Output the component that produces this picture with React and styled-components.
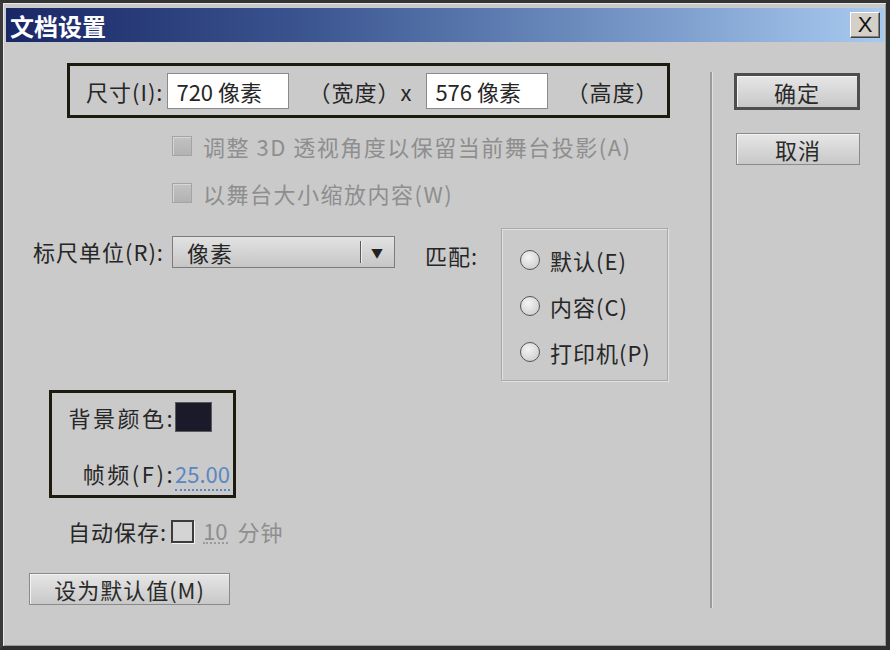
import React from 'react'
import styled, { createGlobalStyle } from 'styled-components'

const GlobalStyle = createGlobalStyle`
  html, body {
    margin: 0;
    padding: 0;
    background: #2b2b2b;
  }
  body {
    font-family: "Noto Sans CJK SC", "Noto Sans", sans-serif;
  }
`

const Window = styled.div`
  width: 890px;
  height: 650px;
  box-sizing: border-box;
  background: #cacaca;
  border-top: 3px solid #333;
  border-left: 3px solid #3a3a3a;
  border-right: 4px solid #2e2e2e;
  border-bottom: 4px solid #2e2e2e;
  box-shadow: inset 1px 1px 0 #e8e8e8, inset -1px -1px 0 #9a9a9a;
  padding: 5px 2px 0 3px;
  display: flex;
  flex-direction: column;
  color: #262626;
  font-size: 22px;
  letter-spacing: 1px;
`

const TitleBar = styled.div`
  height: 34px;
  flex: none;
  display: flex;
  align-items: center;
  justify-content: space-between;
  padding: 0 4px 0 4px;
  background: linear-gradient(90deg, #1a2766 0%, #3c5692 35%, #7394c4 70%, #a8caf0 100%);
`

const Title = styled.span`
  color: #fff;
  font-weight: bold;
  font-size: 24px;
  letter-spacing: 0;
`

const CloseButton = styled.div`
  width: 30px;
  height: 26px;
  box-sizing: border-box;
  background: #d4d0c8;
  border: 1px solid;
  border-color: #fff #404040 #404040 #fff;
  box-shadow: inset -1px -1px 0 #808080;
  display: flex;
  align-items: center;
  justify-content: center;
  color: #111;
  font-family: "Liberation Sans", sans-serif;
  font-size: 22px;
  letter-spacing: 0;
`

const Body = styled.div`
  flex: 1;
  display: flex;
`

const Main = styled.div`
  width: 704px;
  display: flex;
  flex-direction: column;
  padding-top: 21px;
`

const Highlight = styled.div`
  border: 3px solid #1d1b0e;
  box-sizing: border-box;
`

const SizeBox = styled(Highlight)`
  margin-left: 61px;
  width: 603px;
  height: 55px;
  display: flex;
  align-items: center;
  padding-left: 16px;
`

const Label = styled.span`
  white-space: nowrap;
  color: ${p => (p.$disabled ? '#8e8e8e' : '#262626')};
  margin-left: ${p => p.$ml || 0}px;
`

const TextInput = styled.div`
  width: 122px;
  height: 36px;
  box-sizing: border-box;
  background: #fff;
  border: 1px solid #8a8a8a;
  display: flex;
  align-items: center;
  padding-left: 8px;
  margin-left: ${p => p.$ml || 0}px;
  margin-right: ${p => p.$mr || 0}px;
  letter-spacing: 0;
`

const CheckRow = styled.div`
  height: 36px;
  margin-top: ${p => p.$mt}px;
  margin-left: 166px;
  display: flex;
  align-items: center;
  gap: 11px;
  letter-spacing: 1.5px;
`

const DisabledBox = styled.span`
  width: 20px;
  height: 20px;
  box-sizing: border-box;
  background: linear-gradient(#c2c2c2, #b2b2b2);
  border: 1px solid #a4a4a4;
  box-shadow: inset 1px 1px 0 #d6d6d6;
`

const RulerRow = styled.div`
  margin-top: 17px;
  display: flex;
  align-items: flex-start;
`

const RulerLabel = styled(Label)`
  margin-left: 27px;
  margin-top: 7px;
  width: 139px;
`

const Select = styled.div`
  margin-top: 8px;
  width: 223px;
  height: 32px;
  box-sizing: border-box;
  border: 1px solid #7c7c7c;
  background: linear-gradient(#e2e2e2, #c6c6c6);
  display: flex;
  align-items: center;
  padding-left: 14px;
`

const SelectValue = styled.span`
  flex: 1;
`

const SelectDivider = styled.span`
  width: 1px;
  height: 22px;
  background: #5a5a5a;
  box-shadow: 1px 0 0 #eee;
`

const Arrow = styled.span`
  width: 33px;
  display: flex;
  justify-content: center;
  font-size: 12px;
  color: #222;
`

const MatchLabel = styled(Label)`
  margin-left: 30px;
  margin-top: 11px;
  width: 76px;
`

const GroupBox = styled.div`
  width: 167px;
  height: 153px;
  box-sizing: border-box;
  border: 1px solid #a8a8a8;
  box-shadow: 1px 1px 0 #e2e2e2, inset 1px 1px 0 #e2e2e2;
  padding: 13px 0 0 18px;
  display: flex;
  flex-direction: column;
  gap: 10px;
`

const RadioRow = styled.div`
  height: 36px;
  display: flex;
  align-items: center;
  gap: 10px;
`

const Radio = styled.span`
  width: 20px;
  height: 20px;
  box-sizing: border-box;
  border-radius: 50%;
  border: 1.5px solid #555;
  background: radial-gradient(circle at 40% 35%, #f4f4f4, #c6c6c6);
`

const StageBox = styled(Highlight)`
  margin-top: 9px;
  margin-left: 43px;
  width: 187px;
  height: 108px;
  padding-top: 9px;
  display: grid;
  grid-template-columns: 123px auto;
  grid-auto-rows: 30px;
  row-gap: 26px;
  align-items: center;
  letter-spacing: 2.5px;
`

const RightLabel = styled(Label)`
  text-align: right;
  padding-right: 0;
`

const Swatch = styled.span`
  width: 37px;
  height: 30px;
  box-sizing: border-box;
  background: #1a1a2a;
  border: 1px solid #5a5a5a;
`

const LinkValue = styled.span`
  color: ${p => (p.$disabled ? '#8e8e8e' : '#5a86c4')};
  border-bottom: 2px dotted ${p => (p.$disabled ? '#9a9a9a' : '#5a86c4')};
  line-height: 24px;
  letter-spacing: 0;
`

const AutoSaveRow = styled.div`
  margin-top: 15px;
  height: 36px;
  display: flex;
  align-items: center;
  padding-left: 62px;
`

const EmptyBox = styled.span`
  width: 23px;
  height: 23px;
  box-sizing: border-box;
  border: 2px solid #3c3c3c;
  background: #d4d4d4;
  box-shadow: 1px 1px 0 #f2f2f2;
  margin: 0 9px 0 4px;
`

const Button = styled.div`
  width: ${p => p.$w}px;
  height: ${p => p.$h}px;
  box-sizing: border-box;
  display: flex;
  align-items: center;
  justify-content: center;
  background: linear-gradient(#e6e6e6, #c8c8c8);
  border: ${p => (p.$primary ? '3px solid #4e4e4e' : '1px solid #8a8a8a')};
  box-shadow: inset 1px 1px 0 #f4f4f4;
  color: #2a2a2a;
`

const DefaultButton = styled(Button)`
  margin-top: 24px;
  margin-left: 23px;
`

const Separator = styled.div`
  width: 2px;
  margin: 30px 0 0 0;
  height: 536px;
  background: #9c9c9c;
  box-shadow: 1px 0 0 #e0e0e0;
`

const Side = styled.div`
  padding: 31px 0 0 22px;
  display: flex;
  flex-direction: column;
  align-items: flex-start;
  gap: 23px;
`

const SideCancel = styled(Button)`
  margin-left: 2px;
`

export default function App() {
  return (
    <>
      <GlobalStyle />
      <Window>
        <TitleBar>
          <Title>文档设置</Title>
          <CloseButton>X</CloseButton>
        </TitleBar>
        <Body>
          <Main>
            <SizeBox>
              <Label>尺寸(I):</Label>
              <TextInput $ml={4} $mr={19}>720 像素</TextInput>
              <Label>（宽度）x</Label>
              <TextInput $ml={14} $mr={18}>576 像素</TextInput>
              <Label>（高度）</Label>
            </SizeBox>

            <CheckRow $mt={10}>
              <DisabledBox />
              <Label $disabled>调整 3D 透视角度以保留当前舞台投影(A)</Label>
            </CheckRow>
            <CheckRow $mt={11}>
              <DisabledBox />
              <Label $disabled>以舞台大小缩放内容(W)</Label>
            </CheckRow>

            <RulerRow>
              <RulerLabel>标尺单位(R):</RulerLabel>
              <Select>
                <SelectValue>像素</SelectValue>
                <SelectDivider />
                <Arrow>▼</Arrow>
              </Select>
              <MatchLabel>匹配:</MatchLabel>
              <GroupBox>
                <RadioRow>
                  <Radio />
                  <Label>默认(E)</Label>
                </RadioRow>
                <RadioRow>
                  <Radio />
                  <Label>内容(C)</Label>
                </RadioRow>
                <RadioRow>
                  <Radio />
                  <Label>打印机(P)</Label>
                </RadioRow>
              </GroupBox>
            </RulerRow>

            <StageBox>
              <RightLabel>背景颜色:</RightLabel>
              <Swatch />
              <RightLabel>帧频(F):</RightLabel>
              <span>
                <LinkValue>25.00</LinkValue>
              </span>
            </StageBox>

            <AutoSaveRow>
              <Label>自动保存:</Label>
              <EmptyBox />
              <LinkValue $disabled>10</LinkValue>
              <Label $disabled $ml={10}>分钟</Label>
            </AutoSaveRow>

            <DefaultButton $w={201} $h={32}>设为默认值(M)</DefaultButton>
          </Main>
          <Separator />
          <Side>
            <Button $primary $w={126} $h={37}>确定</Button>
            <SideCancel $w={124} $h={32}>取消</SideCancel>
          </Side>
        </Body>
      </Window>
    </>
  )
}
